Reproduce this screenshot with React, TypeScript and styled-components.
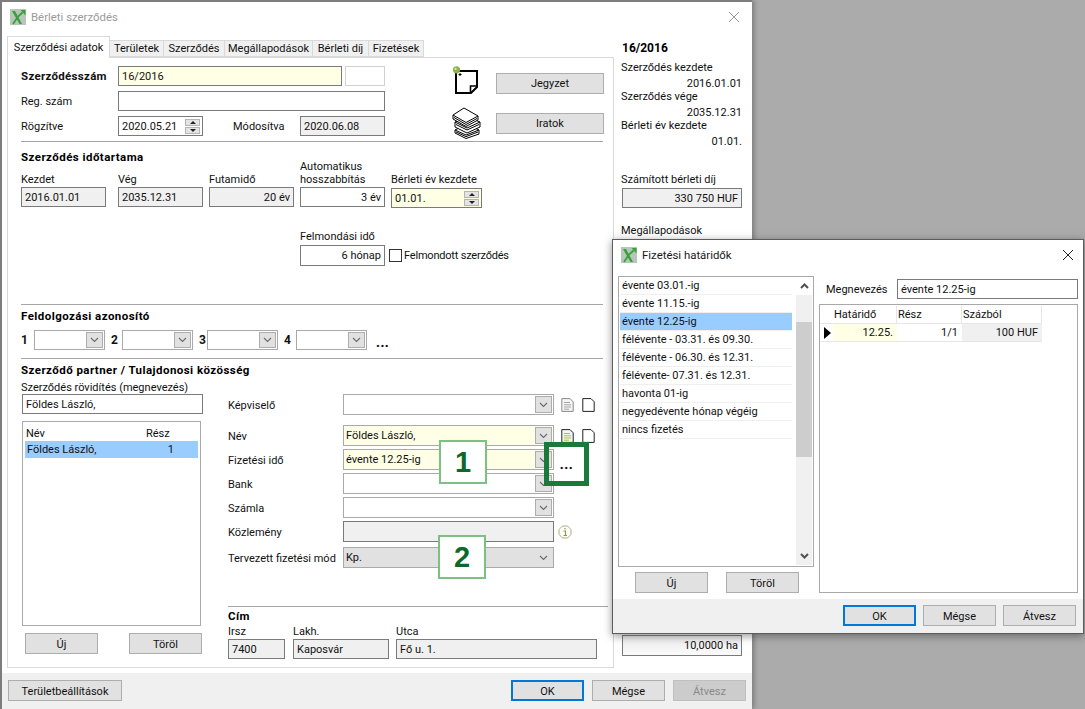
import React from 'react';
import styled, { createGlobalStyle } from 'styled-components';

const GlobalStyle = createGlobalStyle`
  html, body { margin: 0; padding: 0; background: #ababab; }
  body { font-family: Roboto, "Liberation Sans", sans-serif; font-size: 11px; color: #111; }
  * { box-sizing: border-box; }
`;

const Desktop = styled.div`
  position: relative;
  width: 1085px;
  height: 709px;
  overflow: hidden;
  background: #ababab;
`;

const MainWindow = styled.div`
  width: 752px;
  height: 709px;
  display: flex;
  flex-direction: column;
  background: #fff;
  border-top: 2px solid #7d7d7d;
  border-left: 2px solid #7d7d7d;
  box-shadow: 2px 0 5px rgba(60, 60, 60, 0.45);
`;

const TitleBar = styled.div`
  height: 34px;
  flex: none;
  display: flex;
  align-items: center;
  padding: 0 12px 4px 8px;
  gap: 5px;
`;

const TitleText = styled.span<{ $dim?: boolean }>`
  color: ${(p) => (p.$dim ? '#9a9a9a' : '#1a1a1a')};
  font-size: 11.4px;
  flex: 1;
`;

const CloseBox = styled.div`
  width: 12px;
  height: 12px;
  display: flex;
`;

const Body = styled.div`
  flex: 1;
  display: flex;
  min-height: 0;
`;

const LeftPane = styled.div`
  width: 612px;
  flex: none;
  padding-left: 5px;
  display: flex;
  flex-direction: column;
`;

const TabStrip = styled.div`
  display: flex;
  align-items: flex-end;
  height: 21px;
  flex: none;
  position: relative;
  z-index: 1;
`;

const Tab = styled.div<{ $active?: boolean; $w: number }>`
  width: ${(p) => p.$w}px;
  height: ${(p) => (p.$active ? 22 : 17)}px;
  margin-bottom: ${(p) => (p.$active ? -1 : 0)}px;
  display: flex;
  align-items: center;
  justify-content: center;
  background: ${(p) => (p.$active ? '#fff' : '#f0f0f0')};
  border: 1px solid #d9d9d9;
  border-left-width: ${(p) => (p.$active ? 1 : 0)}px;
  border-bottom-width: ${(p) => (p.$active ? 0 : 1)}px;
  white-space: nowrap;
`;

const TabPanel = styled.div`
  height: 611px;
  border: 1px solid #d9d9d9;
  padding-left: 13px;
  display: flex;
  flex-direction: column;
  position: relative;
`;

const Divider = styled.div<{ $w?: number }>`
  width: ${(p) => p.$w ?? 582}px;
  height: 1px;
  flex: none;
  background: #a6a6a6;
`;

const Heading = styled.div`
  font-weight: 700;
  font-size: 11.5px;
  line-height: 14px;
  height: 14px;
  letter-spacing: 0.45px;
  white-space: nowrap;
  color: #000;
`;

const TopSection = styled.div`
  display: flex;
  height: 83px;
  flex: none;
`;

const TopFields = styled.div`
  width: 431px;
  padding-top: 8px;
  display: flex;
  flex-direction: column;
  gap: 5px;
`;

const Row = styled.div`
  display: flex;
  align-items: center;
  height: 20px;
`;

const RowLabel = styled.span<{ $w: number; $bold?: boolean; $pad?: number }>`
  width: ${(p) => p.$w}px;
  flex: none;
  padding-left: ${(p) => p.$pad ?? 0}px;
  white-space: nowrap;
  font-size: ${(p) => (p.$bold ? 11.5 : 11)}px;
  font-weight: ${(p) => (p.$bold ? 700 : 400)};
  letter-spacing: ${(p) => (p.$bold ? '0.3px' : '0')};
`;

const Field = styled.div<{ $w: number; $h?: number; $kind?: 'edit' | 'note' | 'plain' | 'read'; $right?: boolean }>`
  width: ${(p) => p.$w}px;
  height: ${(p) => p.$h ?? 20}px;
  flex: none;
  display: flex;
  align-items: center;
  justify-content: ${(p) => (p.$right ? 'flex-end' : 'flex-start')};
  padding: 0 3px;
  white-space: nowrap;
  overflow: hidden;
  background: ${(p) => (p.$kind === 'note' ? '#ffffe6' : p.$kind === 'read' ? '#f0f0f0' : '#fff')};
  border: 1px solid ${(p) => (p.$kind === 'plain' ? '#d2d2d2' : '#7a7a7a')};
`;

const SideField = styled(Field)`
  margin-left: 3px;
`;

const Spinner = styled.div`
  margin-left: auto;
  margin-right: -1px;
  width: 15px;
  flex: none;
  display: flex;
  flex-direction: column;
  gap: 1px;
`;

const SpinPart = styled.div`
  height: 7px;
  background: #e4e4e4;
  border: 1px solid #b5b5b5;
  display: flex;
  align-items: center;
  justify-content: center;
`;

const SpinGlyph = styled.span<{ $down?: boolean }>`
  width: 0;
  height: 0;
  border-left: 3px solid transparent;
  border-right: 3px solid transparent;
  ${(p) => (p.$down ? 'border-top: 3px solid #222;' : 'border-bottom: 3px solid #222;')}
`;

const RowPointer = styled.span`
  width: 0;
  height: 0;
  border-left: 7px solid #000;
  border-top: 6px solid transparent;
  border-bottom: 6px solid transparent;
`;

const ActionGrid = styled.div`
  display: grid;
  grid-template-columns: 44px 108px;
  grid-auto-rows: 40px;
  align-items: center;
  padding-top: 5px;
`;

const IconCell = styled.div<{ $lift?: number }>`
  display: flex;
  margin-top: ${(p) => p.$lift ?? 0}px;
`;

const Button = styled.div<{ $w?: number; $tone?: 'default' | 'primary' | 'disabled' }>`
  width: ${(p) => p.$w ?? 73}px;
  height: 21px;
  flex: none;
  display: flex;
  align-items: center;
  justify-content: center;
  padding-top: 1px;
  white-space: nowrap;
  background: ${(p) => (p.$tone === 'disabled' ? '#cccccc' : '#e1e1e1')};
  color: ${(p) => (p.$tone === 'disabled' ? '#8a8a8a' : '#111')};
  border: ${(p) => (p.$tone === 'primary' ? '2px solid #0078d7' : p.$tone === 'disabled' ? '1px solid #bfbfbf' : '1px solid #adadad')};
`;

const TermGrid = styled.div`
  display: grid;
  grid-template-columns: 97px 91px 91px 91px 92px;
  grid-template-rows: 23px 13px 22px;
  width: 462px;
  margin-top: 8px;
  flex: none;
`;

const GridHeading = styled(Heading)`
  grid-column: 1 / span 3;
  grid-row: 1;
`;

const TopLabel = styled.span`
  grid-column: 4;
  grid-row: 1;
  align-self: end;
  line-height: 13px;
  white-space: nowrap;
`;

const ColLabel = styled.span<{ $col?: number }>`
  ${(p) => (p.$col ? `grid-column: ${p.$col}; grid-row: 2;` : '')}
  line-height: 13px;
  white-space: nowrap;
`;

const GridField = styled.div<{ $drop?: number }>`
  grid-row: 3;
  padding-top: ${(p) => p.$drop ?? 1}px;
`;

const NoticeRow = styled.div`
  display: flex;
  align-items: flex-end;
  margin: 22px 0 38px 279px;
  gap: 4px;
  flex: none;
`;

const NoticeCol = styled.div`
  display: flex;
  flex-direction: column;
  gap: 2px;
`;

const CheckLine = styled.div`
  width: 119px;
  height: 21px;
  display: flex;
  align-items: center;
  gap: 2px;
  letter-spacing: -0.2px;
  white-space: nowrap;
`;

const CheckBox = styled.div`
  width: 13px;
  height: 13px;
  flex: none;
  border: 1px solid #333;
  background: #fff;
`;

const IdHeading = styled(Heading)`
  margin-top: 4px;
  flex: none;
`;

const IdRow = styled.div`
  display: flex;
  align-items: center;
  gap: 6px;
  margin: 7px 0 8px;
  height: 20px;
  flex: none;
`;

const IdSlot = styled.div`
  display: flex;
  align-items: center;
`;

const IdNumber = styled.span<{ $w: number }>`
  width: ${(p) => p.$w}px;
  font-size: 12px;
  font-weight: 700;
`;

const Dots = styled.span`
  font-size: 13px;
  font-weight: 900;
  margin: 4px 0 0 3px;
  letter-spacing: 0.5px;
`;

const ComboBox = styled.div<{ $w: number; $h?: number; $tone?: 'white' | 'note' | 'flat' }>`
  width: ${(p) => p.$w}px;
  height: ${(p) => p.$h ?? 21}px;
  flex: none;
  display: flex;
  align-items: center;
  padding: 0 1px 0 2px;
  background: ${(p) => (p.$tone === 'note' ? '#ffffe6' : p.$tone === 'flat' ? '#e1e1e1' : '#fff')};
  border: 1px solid #a9a9a9;
  white-space: nowrap;
`;

const ComboButton = styled.div<{ $flat?: boolean }>`
  margin-left: auto;
  width: 17px;
  height: calc(100% - 2px);
  flex: none;
  display: flex;
  align-items: center;
  justify-content: center;
  background: ${(p) => (p.$flat ? 'transparent' : '#e1e1e1')};
  border: 1px solid ${(p) => (p.$flat ? 'transparent' : '#adadad')};
`;

const PartnerHeading = styled(Heading)`
  margin-top: 4px;
  flex: none;
`;

const PartnerBody = styled.div`
  display: flex;
  flex: none;
  gap: 24px;
`;

const PartnerLeft = styled.div`
  width: 183px;
  flex: none;
  display: flex;
  flex-direction: column;
`;

const SmallLabel = styled.div`
  height: 12px;
  line-height: 12px;
  margin-top: 5px;
  white-space: nowrap;
`;

const ShortName = styled(Field)`
  margin: 0 0 0 1px;
`;

const OwnerList = styled.div`
  width: 179px;
  height: 205px;
  margin: 7px 0 7px 1px;
  border: 1px solid #a9a9a9;
  padding: 3px 2px;
`;

const OwnerHead = styled.div`
  display: flex;
  height: 16px;
  align-items: center;
  padding-left: 1px;
`;

const OwnerHeadName = styled.span`
  width: 120px;
`;

const OwnerRow = styled.div`
  display: flex;
  justify-content: space-between;
  align-items: center;
  height: 17px;
  padding: 0 24px 0 2px;
  background: #99ccff;
`;

const PairButtons = styled.div`
  display: flex;
  justify-content: space-between;
  padding: 0 2px 0 4px;
`;

const PartnerRight = styled.div`
  width: 380px;
  flex: none;
  padding-top: 17px;
  display: flex;
  flex-direction: column;
`;

const FormRow = styled.div<{ $top?: number }>`
  display: flex;
  align-items: center;
  height: 21px;
  margin-top: ${(p) => p.$top ?? 3}px;
  flex: none;
`;

const FormLabel = styled.span`
  width: 115px;
  flex: none;
  padding-top: 1px;
  white-space: nowrap;
`;

const RowIcons = styled.div`
  display: flex;
  gap: 8px;
  margin-left: 7px;
  align-items: center;
`;

const InfoWrap = styled.div`
  margin-left: 4px;
  display: flex;
`;

const AddressRule = styled(Divider)`
  margin-top: 38px;
`;

const AddressHeading = styled(Heading)`
  margin-top: 3px;
  height: 13px;
  line-height: 13px;
`;

const AddressGrid = styled.div`
  display: grid;
  grid-template-columns: 65px 103px 201px;
  row-gap: 1px;
  margin-top: 2px;
`;

const AddressLabel = styled.span`
  line-height: 13px;
`;

const RightPane = styled.div`
  flex: 1;
  padding: 4px 0 0 7px;
  display: flex;
  flex-direction: column;
`;

const SummaryTitle = styled.div`
  font-weight: 700;
  font-size: 12px;
  line-height: 16px;
  margin: 0 0 5px 1px;
  color: #000;
`;

const SummaryLabel = styled.div<{ $top?: number }>`
  height: 13px;
  line-height: 13px;
  margin-top: ${(p) => p.$top ?? 0}px;
  white-space: nowrap;
`;

const SummaryValue = styled.div`
  width: 121px;
  height: 13px;
  line-height: 13px;
  margin-top: 3px;
  text-align: right;
`;

const FeeField = styled(Field)`
  margin: 2px 0 0 1px;
`;

const AreaField = styled(Field)<{ $top: number }>`
  margin: ${(p) => p.$top}px 0 0 1px;
  background: linear-gradient(#ececec, #fafafa);
`;

const Footer = styled.div`
  height: 36px;
  flex: none;
  margin-top: 5px;
  background: #f0f0f0;
  display: flex;
  align-items: flex-start;
  padding: 7px 6px 0 6px;
  gap: 8px;
`;

const FooterSpacer = styled.div`
  flex: 1;
`;

const Callout = styled.div<{ $x: number; $y: number }>`
  position: absolute;
  left: ${(p) => p.$x}px;
  top: ${(p) => p.$y}px;
  width: 48px;
  height: 44px;
  display: flex;
  align-items: center;
  justify-content: center;
  background: #fff;
  border: 2px solid #7cc084;
  color: #0b6a2a;
  font-family: "Liberation Sans", sans-serif;
  font-size: 29px;
  font-weight: 700;
`;

const Highlight = styled.div`
  position: absolute;
  left: 544px;
  top: 442px;
  width: 45px;
  height: 44px;
  border: 5px solid #197a3c;
  display: flex;
  align-items: center;
  justify-content: center;
  font-weight: 900;
  font-size: 13px;
  color: #111;
  letter-spacing: 0.5px;
  padding-top: 1px;
`;

const Dialog = styled.div`
  position: absolute;
  left: 612px;
  top: 239px;
  width: 472px;
  height: 395px;
  background: #fff;
  border: 1px solid #5c5c5c;
  box-shadow: 0 2px 8px rgba(40, 40, 40, 0.5);
  display: flex;
  flex-direction: column;
`;

const DialogTitle = styled(TitleBar)`
  padding: 0 9px 0 8px;
  height: 30px;
  gap: 5px;
`;

const DialogBody = styled.div`
  flex: 1;
  display: flex;
  padding: 6px 5px 6px 5px;
  gap: 5px;
`;

const DialogLeft = styled.div`
  width: 196px;
  display: flex;
  flex-direction: column;
  gap: 5px;
`;

const TermList = styled.div`
  flex: 1;
  display: flex;
  border: 1px solid #a9a9a9;
  padding: 0 1px 1px 1px;
`;

const TermRows = styled.div`
  flex: 1;
  padding-right: 4px;
`;

const TermRow = styled.div<{ $selected?: boolean }>`
  height: 18px;
  display: flex;
  align-items: center;
  padding-left: 2px;
  white-space: nowrap;
  background: ${(p) => (p.$selected ? '#99ccff' : '#fff')};
  border-bottom: 1px solid #efefef;
`;

const ScrollBar = styled.div`
  width: 16px;
  flex: none;
  display: flex;
  flex-direction: column;
  background: #f0f0f0;
`;

const ScrollEnd = styled.div`
  height: 18px;
  flex: none;
  display: flex;
  align-items: center;
  justify-content: center;
  background: #fff;
`;

const ScrollGap = styled.div`
  height: 27px;
  flex: none;
`;

const ScrollThumb = styled.div`
  height: 135px;
  flex: none;
  background: #cdcdcd;
`;

const ScrollFill = styled.div`
  flex: 1;
`;

const ScrollEndDown = styled(ScrollEnd)`
  background: #f0f0f0;
`;

const DialogPairs = styled.div`
  display: flex;
  gap: 18px;
  padding-left: 17px;
`;

const DialogRight = styled.div`
  flex: 1;
  display: flex;
  flex-direction: column;
  gap: 5px;
`;

const NameRow = styled.div`
  display: flex;
  align-items: center;
  height: 20px;
  margin-top: 3px;
  padding-left: 7px;
`;

const NameLabel = styled.span`
  width: 71px;
  flex: none;
`;

const DataGrid = styled.div`
  flex: 1;
  border: 1px solid #a9a9a9;
  padding: 1px;
  display: grid;
  grid-template-columns: 12px 64px 65px 80px;
  grid-template-rows: 18px 18px;
  align-content: start;
`;

const HeadCell = styled.div`
  display: flex;
  align-items: center;
  padding-left: 1px;
  border-right: 1px solid #e6e6e6;
  border-bottom: 1px solid #e6e6e6;
  white-space: nowrap;
`;

const MarkCell = styled.div`
  display: flex;
  align-items: center;
  justify-content: center;
  border-bottom: 1px solid #e6e6e6;
`;

const DataCell = styled.div<{ $tone: 'note' | 'white' | 'read' }>`
  display: flex;
  align-items: center;
  justify-content: flex-end;
  padding-right: 4px;
  white-space: nowrap;
  background: ${(p) => (p.$tone === 'note' ? '#ffffe6' : p.$tone === 'read' ? '#f0f0f0' : '#fff')};
  border-bottom: 1px solid #e6e6e6;
`;

const DialogFooter = styled.div`
  height: 34px;
  flex: none;
  background: #f0f0f0;
  display: flex;
  justify-content: flex-end;
  padding: 6px 7px 0 0;
  gap: 7px;
`;

const Chevron = ({ up, dark }: { up?: boolean; dark?: boolean }) => (
  <svg width="9" height="6" viewBox="0 0 9 6">
    <path
      d={up ? 'M1 5 L4.5 1.5 L8 5' : 'M1 1 L4.5 4.5 L8 1'}
      fill="none"
      stroke={dark ? '#505050' : '#6a6a6a'}
      strokeWidth={dark ? 2 : 1.1}
    />
  </svg>
);

const Close = ({ color }: { color: string }) => (
  <CloseBox>
    <svg width="12" height="12" viewBox="0 0 12 12">
      <path d="M1 1 L11 11 M11 1 L1 11" stroke={color} strokeWidth="1" />
    </svg>
  </CloseBox>
);

const AppLogo = () => (
  <svg width="16" height="16" viewBox="0 0 16 16">
    <rect width="16" height="16" fill="#b7c6b8" />
    <path d="M2 2 L5 2 L12 15 L9.5 15 Z" fill="#35a23a" />
    <path d="M3 15 L8 7.5 L12.5 3.5" fill="none" stroke="#35a23a" strokeWidth="1.8" />
    <path d="M10.5 1 H15.5 V6.5 Z" fill="#35a23a" />
  </svg>
);

const NoteIcon = () => (
  <svg width="28" height="28" viewBox="0 0 28 28">
    <path d="M4 5 H25 V21 L19 27 H4 Z" fill="#fff" stroke="#000" strokeWidth="2" />
    <path d="M25 20 H18.5 V27" fill="none" stroke="#000" strokeWidth="1.6" />
    <circle cx="4.5" cy="3.8" r="3.6" fill="#8fb34a" />
    <circle cx="3.6" cy="2.9" r="1.1" fill="#d9e8b8" />
    <path d="M8 7 V10 M6.5 8.5 H9.5" stroke="#000" strokeWidth="1" />
  </svg>
);

const BooksIcon = () => (
  <svg width="29" height="32" viewBox="0 0 29 32">
    <path d="M3 23 L15 17 L27 23 V27 L14 31.5 L3 26 Z" fill="#fff" stroke="#000" />
    <path d="M3 23 L14 28 L27 23 M4 25 L14 29.6 L26 25" fill="none" stroke="#000" />
    <path d="M3 15 L16 10 L28 15 V20 L15 26 L3 20 Z" fill="#fff" stroke="#000" />
    <path d="M3 15 L15 21 L28 15 M4 17.5 L15 23 L27 17.5" fill="none" stroke="#000" />
    <path d="M1 8 L12 1 L26 9 V13 L14 19.5 L1 12 Z" fill="#fff" stroke="#000" />
    <path d="M1 8 L14 15.5 L26 9 M2 10.5 L14 17.5 L25 11.5" fill="none" stroke="#000" />
  </svg>
);

const PageIcon = ({ lined, tone }: { lined?: boolean; tone?: string }) => (
  <svg width="13" height="14" viewBox="0 0 13 14">
    <path
      d="M0.8 0.6 H9 L12.2 3.8 V13.4 H0.8 Z"
      fill={lined ? '#f4f4f4' : '#fff'}
      stroke={lined && !tone ? '#8a8a8a' : '#222'}
      strokeWidth="1"
    />
    {lined && <path d="M3 4.5 H9 M3 6.8 H10 M3 9 H10 M3 11.2 H8" stroke={tone ?? '#a6a6a6'} strokeWidth="1" />}
  </svg>
);

const InfoIcon = () => (
  <svg width="14" height="14" viewBox="0 0 14 14">
    <path d="M4.5 1 H9.5 L13 4.5 V9.5 L9.5 13 H4.5 L1 9.5 V4.5 Z" fill="#fff" stroke="#a9ad7a" />
    <path d="M7 3 V4.5 M5.5 6 H7.5 V10.5 M5.5 10.5 H9" fill="none" stroke="#8f9b3a" strokeWidth="1.2" />
  </svg>
);

const Combo = ({ w, h, tone, text }: { w: number; h?: number; tone?: 'white' | 'note' | 'flat'; text?: string }) => (
  <ComboBox $w={w} $h={h} $tone={tone}>
    {text}
    <ComboButton $flat={tone === 'flat'}>
      <Chevron />
    </ComboButton>
  </ComboBox>
);

const Spin = () => (
  <Spinner>
    <SpinPart>
      <SpinGlyph />
    </SpinPart>
    <SpinPart>
      <SpinGlyph $down />
    </SpinPart>
  </Spinner>
);

const tabs: [string, number][] = [
  ['Területek', 54],
  ['Szerződés', 61],
  ['Megállapodások', 88],
  ['Bérleti díj', 56],
  ['Fizetések', 55],
];

const idSlots: [string, number][] = [
  ['1', 13],
  ['2', 11],
  ['3', 8],
  ['4', 12],
];

const termRows = [
  'évente 03.01.-ig',
  'évente 11.15.-ig',
  'évente 12.25-ig',
  'félévente - 03.31. és 09.30.',
  'félévente - 06.30. és 12.31.',
  'félévente- 07.31. és 12.31.',
  'havonta 01-ig',
  'negyedévente hónap végéig',
  'nincs fizetés',
];

export default function App() {
  return (
    <Desktop>
      <GlobalStyle />
      <MainWindow>
        <TitleBar>
          <AppLogo />
          <TitleText $dim>Bérleti szerződés</TitleText>
          <Close color="#9a9a9a" />
        </TitleBar>
        <Body>
          <LeftPane>
            <TabStrip>
              <Tab $active $w={103}>Szerződési adatok</Tab>
              {tabs.map(([name, w]) => (
                <Tab key={name} $w={w}>{name}</Tab>
              ))}
            </TabStrip>
            <TabPanel>
              <TopSection>
                <TopFields>
                  <Row>
                    <RowLabel $w={97} $bold>Szerződésszám</RowLabel>
                    <Field $w={224} $kind="note">16/2016</Field>
                    <SideField $w={40} $kind="plain" />
                  </Row>
                  <Row>
                    <RowLabel $w={97}>Reg. szám</RowLabel>
                    <Field $w={267} />
                  </Row>
                  <Row>
                    <RowLabel $w={97}>Rögzítve</RowLabel>
                    <Field $w={85}>2020.05.21<Spin /></Field>
                    <RowLabel $w={97} $pad={30}>Módosítva</RowLabel>
                    <Field $w={85} $kind="read">2020.06.08</Field>
                  </Row>
                </TopFields>
                <ActionGrid>
                  <IconCell $lift={-6}><NoteIcon /></IconCell>
                  <Button $w={108}>Jegyzet</Button>
                  <IconCell><BooksIcon /></IconCell>
                  <Button $w={108}>Iratok</Button>
                </ActionGrid>
              </TopSection>
              <Divider />

              <TermGrid>
                <GridHeading>Szerződés időtartama</GridHeading>
                <TopLabel>Automatikus</TopLabel>
                <ColLabel $col={1}>Kezdet</ColLabel>
                <ColLabel $col={2}>Vég</ColLabel>
                <ColLabel $col={3}>Futamidő</ColLabel>
                <ColLabel $col={4}>hosszabbítás</ColLabel>
                <ColLabel $col={5}>Bérleti év kezdete</ColLabel>
                <GridField><Field $w={85} $kind="read">2016.01.01</Field></GridField>
                <GridField><Field $w={85} $kind="read">2035.12.31</Field></GridField>
                <GridField><Field $w={85} $kind="read" $right>20 év</Field></GridField>
                <GridField><Field $w={85} $right>3 év</Field></GridField>
                <GridField $drop={2}>
                  <Field $w={91} $kind="note">01.01.<Spin /></Field>
                </GridField>
              </TermGrid>
              <NoticeRow>
                <NoticeCol>
                  <ColLabel>Felmondási idő</ColLabel>
                  <Field $w={85} $h={21} $right>6 hónap</Field>
                </NoticeCol>
                <CheckLine>
                  <CheckBox />
                  Felmondott szerződés
                </CheckLine>
              </NoticeRow>
              <Divider />

              <IdHeading>Feldolgozási azonosító</IdHeading>
              <IdRow>
                {idSlots.map(([n, w]) => (
                  <IdSlot key={n}>
                    <IdNumber $w={w}>{n}</IdNumber>
                    <Combo w={71} h={20} />
                  </IdSlot>
                ))}
                <Dots>...</Dots>
              </IdRow>
              <Divider />

              <PartnerHeading>Szerződő partner / Tulajdonosi közösség</PartnerHeading>
              <PartnerBody>
                <PartnerLeft>
                  <SmallLabel>Szerződés rövidítés (megnevezés)</SmallLabel>
                  <ShortName $w={181}>Földes László,</ShortName>
                  <OwnerList>
                    <OwnerHead>
                      <OwnerHeadName>Név</OwnerHeadName>
                      Rész
                    </OwnerHead>
                    <OwnerRow>
                      <span>Földes László,</span>
                      <span>1</span>
                    </OwnerRow>
                  </OwnerList>
                  <PairButtons>
                    <Button>Új</Button>
                    <Button>Töröl</Button>
                  </PairButtons>
                </PartnerLeft>
                <PartnerRight>
                  <FormRow $top={0}>
                    <FormLabel>Képviselő</FormLabel>
                    <Combo w={211} />
                    <RowIcons>
                      <PageIcon lined />
                      <PageIcon />
                    </RowIcons>
                  </FormRow>
                  <FormRow $top={10}>
                    <FormLabel>Név</FormLabel>
                    <Combo w={211} tone="note" text="Földes László," />
                    <RowIcons>
                      <PageIcon lined tone="#a3c43f" />
                      <PageIcon />
                    </RowIcons>
                  </FormRow>
                  <FormRow>
                    <FormLabel>Fizetési idő</FormLabel>
                    <Combo w={211} tone="note" text="évente 12.25-ig" />
                  </FormRow>
                  <FormRow>
                    <FormLabel>Bank</FormLabel>
                    <Combo w={211} />
                  </FormRow>
                  <FormRow>
                    <FormLabel>Számla</FormLabel>
                    <Combo w={211} />
                  </FormRow>
                  <FormRow>
                    <FormLabel>Közlemény</FormLabel>
                    <Field $w={211} $h={21} $kind="read" />
                    <InfoWrap><InfoIcon /></InfoWrap>
                  </FormRow>
                  <FormRow $top={5}>
                    <FormLabel>Tervezett fizetési mód</FormLabel>
                    <Combo w={211} tone="flat" text="Kp." />
                  </FormRow>
                  <AddressRule $w={380} />
                  <AddressHeading>Cím</AddressHeading>
                  <AddressGrid>
                    <AddressLabel>Irsz</AddressLabel>
                    <AddressLabel>Lakh.</AddressLabel>
                    <AddressLabel>Utca</AddressLabel>
                    <Field $w={57} $kind="read">7400</Field>
                    <Field $w={96} $kind="read">Kaposvár</Field>
                    <Field $w={201} $kind="read">Fő u. 1.</Field>
                  </AddressGrid>
                </PartnerRight>
              </PartnerBody>
            </TabPanel>
          </LeftPane>

          <RightPane>
            <SummaryTitle>16/2016</SummaryTitle>
            <SummaryLabel>Szerződés kezdete</SummaryLabel>
            <SummaryValue>2016.01.01</SummaryValue>
            <SummaryLabel>Szerződés vége</SummaryLabel>
            <SummaryValue>2035.12.31</SummaryValue>
            <SummaryLabel>Bérleti év kezdete</SummaryLabel>
            <SummaryValue>01.01.</SummaryValue>
            <SummaryLabel $top={25}>Számított bérleti díj</SummaryLabel>
            <FeeField $w={120} $kind="read" $right>330 750 HUF</FeeField>
            <SummaryLabel $top={16}>Megállapodások</SummaryLabel>
            <AreaField $w={120} $h={21} $top={398} $right>10,0000 ha</AreaField>
          </RightPane>
        </Body>
        <Footer>
          <Button $w={114}>Területbeállítások</Button>
          <FooterSpacer />
          <Button $tone="primary">OK</Button>
          <Button>Mégse</Button>
          <Button $tone="disabled">Átvesz</Button>
        </Footer>
      </MainWindow>

      <Callout $x={439} $y={440}>1</Callout>
      <Callout $x={438} $y={535}>2</Callout>
      <Highlight>...</Highlight>

      <Dialog>
        <DialogTitle>
          <AppLogo />
          <TitleText>Fizetési határidők</TitleText>
          <Close color="#222" />
        </DialogTitle>
        <DialogBody>
          <DialogLeft>
            <TermList>
              <TermRows>
                {termRows.map((t, i) => (
                  <TermRow key={t} $selected={i === 2}>{t}</TermRow>
                ))}
              </TermRows>
              <ScrollBar>
                <ScrollEnd><Chevron up dark /></ScrollEnd>
                <ScrollGap />
                <ScrollThumb />
                <ScrollFill />
                <ScrollEndDown><Chevron dark /></ScrollEndDown>
              </ScrollBar>
            </TermList>
            <DialogPairs>
              <Button>Új</Button>
              <Button>Töröl</Button>
            </DialogPairs>
          </DialogLeft>
          <DialogRight>
            <NameRow>
              <NameLabel>Megnevezés</NameLabel>
              <Field $w={181} $h={20}>évente 12.25-ig</Field>
            </NameRow>
            <DataGrid>
              <MarkCell />
              <HeadCell>Határidő</HeadCell>
              <HeadCell>Rész</HeadCell>
              <HeadCell>Százból</HeadCell>
              <MarkCell><RowPointer /></MarkCell>
              <DataCell $tone="note">12.25.</DataCell>
              <DataCell $tone="white">1/1</DataCell>
              <DataCell $tone="read">100 HUF</DataCell>
            </DataGrid>
          </DialogRight>
        </DialogBody>
        <DialogFooter>
          <Button $tone="primary">OK</Button>
          <Button>Mégse</Button>
          <Button>Átvesz</Button>
        </DialogFooter>
      </Dialog>
    </Desktop>
  );
}
